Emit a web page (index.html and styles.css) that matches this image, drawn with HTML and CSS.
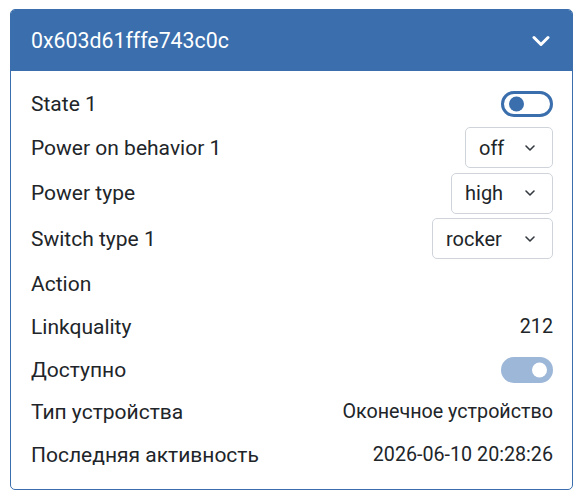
FILE: index.html
```html
<!DOCTYPE html>
<html>
<head>
<meta charset="utf-8">
<link rel="stylesheet" href="styles.css">
</head>
<body>
<div class="card">
  <div class="card-header">
    <span class="title">0x603d61fffe743c0c</span>
    <svg class="hdr-chev" width="18" height="12" viewBox="0 0 18 12"><path d="M2 2.5 L9 9.5 L16 2.5" fill="none" stroke="#fff" stroke-width="3" stroke-linecap="round" stroke-linejoin="round"/></svg>
  </div>
  <div class="card-body">
    <div class="row r43"><span class="label">State 1</span><span class="toggle off"><span class="knob"></span></span></div>
    <div class="row r45"><span class="label">Power on behavior 1</span><span class="select w88">off<svg class="chev" width="12" height="8" viewBox="0 0 12 8"><path d="M2 2 L6 6 L10 2" fill="none" stroke="#343a40" stroke-width="1.6" stroke-linecap="round" stroke-linejoin="round"/></svg></span></div>
    <div class="row r46"><span class="label">Power type</span><span class="select w102">high<svg class="chev" width="12" height="8" viewBox="0 0 12 8"><path d="M2 2 L6 6 L10 2" fill="none" stroke="#343a40" stroke-width="1.6" stroke-linecap="round" stroke-linejoin="round"/></svg></span></div>
    <div class="row r45"><span class="label">Switch type 1</span><span class="select w121">rocker<svg class="chev" width="12" height="8" viewBox="0 0 12 8"><path d="M2 2 L6 6 L10 2" fill="none" stroke="#343a40" stroke-width="1.6" stroke-linecap="round" stroke-linejoin="round"/></svg></span></div>
    <div class="row r45"><span class="label">Action</span></div>
    <div class="row r42"><span class="label">Linkquality</span><span class="value">212</span></div>
    <div class="row r43"><span class="label">Доступно</span><span class="toggle on"><span class="knob"></span></span></div>
    <div class="row r42"><span class="label">Тип устройства</span><span class="value">Оконечное устройство</span></div>
    <div class="row r43"><span class="label">Последняя активность</span><span class="value">2026-06-10 20:28:26</span></div>
  </div>
</div>
</body>
</html>
```
FILE: styles.css
```css
html, body { margin: 0; padding: 0; background: #fff; }
body {
  font-family: Roboto, "Noto Sans", sans-serif;
  color: #212529;
  font-size: 20px;
}
.card {
  margin: 9px 10px 0 10px;
  width: 563px;
  box-sizing: border-box;
  border: 1px solid #3a6ead;
  border-radius: 5px;
  overflow: hidden;
}
.card-header {
  background: #3a6ead;
  color: #fff;
  height: 61px;
  box-sizing: border-box;
  display: flex;
  align-items: center;
  justify-content: space-between;
  padding: 0 22px 0 20px;
  font-size: 21.3px;
}
.hdr-chev { display: block; }
.card-body {
  padding: 11px 19px 13px 20px;
}
.row {
  display: flex;
  align-items: center;
  justify-content: space-between;
  line-height: 30px;
}
.label { font-size: 21px; }
.value { font-size: 19.7px; }
.r42 { height: 42px; }
.r43 { height: 43px; }
.r45 { height: 45px; }
.r46 { height: 46px; }
.toggle {
  position: relative;
  width: 52px;
  height: 26px;
  box-sizing: border-box;
  border-radius: 13px;
  display: inline-block;
}
.toggle.off { border: 3px solid #3a6ead; background: #fff; }
.toggle.on { background: #9db7d9; }
.knob {
  position: absolute;
  top: 50%;
  width: 15px;
  height: 15px;
  border-radius: 50%;
  transform: translateY(-50%);
}
.toggle.off .knob { left: 5px; background: #3a6ead; }
.toggle.on .knob { right: 6px; background: #fff; }
.select {
  height: 41px;
  box-sizing: border-box;
  border: 1px solid #ced4da;
  border-radius: 5px;
  display: inline-flex;
  align-items: center;
  justify-content: space-between;
  padding: 0 16px 0 13px;
}
.w88 { width: 88px; }
.w102 { width: 102px; }
.w121 { width: 121px; }
.chev { display: block; }
```
